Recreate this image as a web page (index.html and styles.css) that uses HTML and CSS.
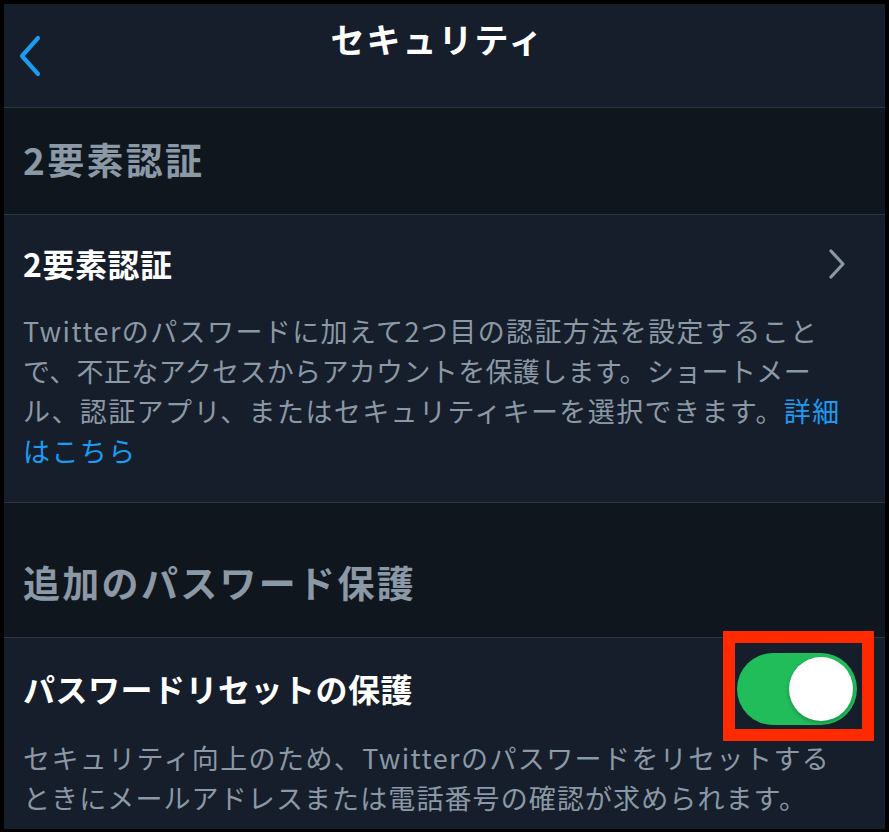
FILE: index.html
```html
<!DOCTYPE html>
<html lang="ja">
<head>
<meta charset="utf-8">
<link rel="stylesheet" href="styles.css">
</head>
<body>
<div class="screen">
  <header class="nav">
    <div class="nav-left">
      <svg class="back" width="28" height="42" viewBox="0 0 28 42"><path d="M22 3 L6 21 L22 39" fill="none" stroke="#1d9bf0" stroke-width="4.2" stroke-linecap="round" stroke-linejoin="round"/></svg>
    </div>
    <h1 class="nav-title">セキュリティ</h1>
    <div class="nav-right"></div>
  </header>

  <div class="section-head first">2要素認証</div>
  <div class="row">
    <span class="row-title">2要素認証</span>
    <svg class="chev" width="20" height="32" viewBox="0 0 20 32"><path d="M4 3 L16 16 L4 29" fill="none" stroke="#8b98a5" stroke-width="3.2" stroke-linecap="round" stroke-linejoin="round"/></svg>
  </div>
  <p class="desc desc-1">Twitterのパスワードに加えて2つ目の認証方法を設定すること<br><span class="tight">で、不正なアクセスからアカウントを保護します。ショートメー</span><br>ル、認証アプリ、またはセキュリティキーを選択できます。<span class="link">詳細<br>はこちら</span></p>

  <div class="section-head second">追加のパスワード保護</div>
  <div class="row row-toggle">
    <span class="row-title">パスワードリセットの保護</span>
    <div class="toggle-wrap">
      <div class="toggle"><div class="knob"></div></div>
      <div class="highlight"></div>
    </div>
  </div>
  <p class="desc desc-2">セキュリティ向上のため、Twitterのパスワードをリセットする<br><span class="mid">ときにメールアドレスまたは電話番号の確認が求められます。</span></p>
</div>
</body>
</html>
```

FILE: styles.css
```css
* { box-sizing: border-box; }
html, body { margin: 0; padding: 0; background: #000; }
body {
  width: 889px;
  height: 832px;
  padding: 4px 4px 3px 4px;
  font-family: "Noto Sans CJK JP", "Noto Sans", sans-serif;
  overflow: hidden;
}
.screen {
  width: 881px;
  height: 825px;
  background: #151e2a;
  overflow: hidden;
}
.nav {
  height: 104px;
  display: grid;
  grid-template-columns: 1fr auto 1fr;
  align-items: start;
  background: #151e2a;
  border-bottom: 1px solid #2c3744;
}
.nav-left { padding: 31px 0 0 12px; }
.back { display: block; }
.nav-title {
  margin: 10px 14px 0 0;
  font-size: 34px;
  line-height: 50px;
  font-weight: 700;
  color: #fff;
  letter-spacing: 2px;
}
.section-head {
  background: #10161e;
  color: #8b98a5;
  font-weight: 700;
  font-size: 37px;
  letter-spacing: 2.3px;
  line-height: 44px;
  padding-left: 19px;
  border-bottom: 1px solid #2c3744;
}
.section-head.first { height: 107px; padding-top: 29px; }
.section-head.second { height: 135px; padding-top: 57px; }
.row {
  display: flex;
  align-items: center;
  justify-content: space-between;
  padding-left: 19px;
}
.row-title {
  color: #fff;
  font-weight: 700;
  font-size: 32px;
  letter-spacing: 0.5px;
  line-height: 44px;
}
.row:not(.row-toggle) { height: 96px; padding-right: 38px; }
.chev { display: block; margin-top: 2px; }
.desc {
  margin: 0;
  color: #8b98a5;
  font-size: 27px;
  line-height: 40px;
  padding-left: 19px;
  white-space: nowrap;
  letter-spacing: 1.4px;
}
.tight { letter-spacing: 0.35px; }
.mid { letter-spacing: 1.1px; }
.desc-1 { padding-bottom: 31px; border-bottom: 1px solid #2c3744; }
.link { color: #1d9bf0; }
.row-toggle { height: 100px; padding-right: 28px; }
.toggle-wrap { position: relative; width: 120px; height: 72px; margin-top: 2px; }
.toggle {
  width: 120px;
  height: 72px;
  border-radius: 36px;
  background: #21bd5b;
  position: relative;
}
.knob {
  position: absolute;
  right: 4px;
  top: 4px;
  width: 64px;
  height: 64px;
  border-radius: 50%;
  background: #fff;
  box-shadow: 0 2px 4px rgba(0,0,0,0.25);
}
.highlight {
  position: absolute;
  left: -14px;
  top: -22px;
  width: 151px;
  height: 110px;
  border: 12px solid #ff2a00;
}
```
